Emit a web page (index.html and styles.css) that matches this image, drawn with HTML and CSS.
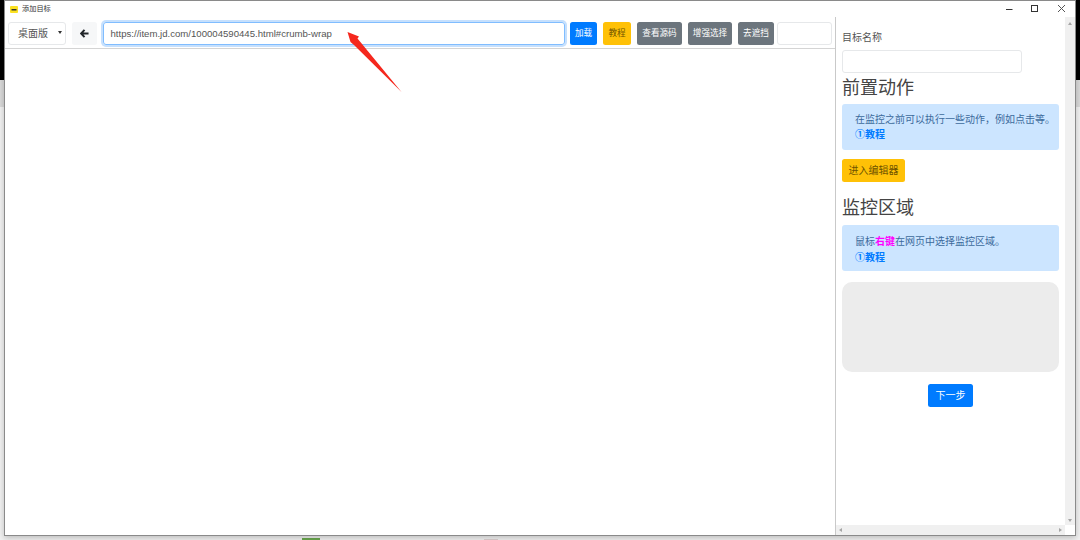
FILE: index.html
```html
<!DOCTYPE html>
<html lang="zh">
<head>
<meta charset="utf-8">
<title>添加目标</title>
<link rel="stylesheet" href="styles.css">
</head>
<body>
<div class="desktop">
  <div class="bits-top"><i></i><i></i><i></i></div>
  <div class="bit-green"></div>
  <div class="bit-pink"></div>
  <div class="window">
    <header class="titlebar">
      <svg class="app-icon" width="8" height="7" viewBox="0 0 8 7"><rect width="8" height="7" rx="1" fill="#fbe122"/><rect x="1.5" y="3" width="5" height="1.5" fill="#333"/></svg>
      <span class="title">添加目标</span>
      <div class="win-controls">
        <svg width="10" height="10" viewBox="0 0 10 10"><path d="M3 5.5h6.5" stroke="#333" fill="none"/></svg>
        <svg width="10" height="10" viewBox="0 0 10 10"><rect x="1.5" y="1.5" width="6" height="6" stroke="#333" fill="none"/></svg>
        <svg width="10" height="10" viewBox="0 0 10 10"><path d="M1 1l7 7M8 1l-7 7" stroke="#555" fill="none"/></svg>
      </div>
    </header>
    <div class="body">
      <main class="browser">
        <div class="toolbar">
          <div class="select">桌面版<span class="caret"></span></div>
          <button class="btn back" type="button" aria-label="返回">
            <svg width="9" height="9" viewBox="0 0 10 10"><path d="M5 1L1.3 5 5 9M1.6 5H9.5" stroke="#212529" stroke-width="2.2" fill="none"/></svg>
          </button>
          <div class="url">https://item.jd.com/100004590445.html#crumb-wrap</div>
          <button class="btn blue w-load" type="button">加载</button>
          <button class="btn yellow w-tut" type="button">教程</button>
          <button class="btn gray w-src" type="button">查看源码</button>
          <button class="btn gray w-enh" type="button">增强选择</button>
          <button class="btn gray w-rem" type="button">去遮挡</button>
          <div class="blank"></div>
        </div>
        <div class="page"></div>
      </main>
      <aside class="side">
        <div class="side-scroll">
          <div class="side-content">
            <label class="label">目标名称</label>
            <div class="field"></div>
            <h3 class="heading first">前置动作</h3>
            <div class="alert">
              <div>在监控之前可以执行一些动作，例如点击等。</div>
              <a class="link">①教程</a>
            </div>
            <button class="btn yellow editor" type="button">进入编辑器</button>
            <h3 class="heading second">监控区域</h3>
            <div class="alert tall">
              <div>鼠标<b class="hot">右键</b>在网页中选择监控区域。</div>
              <a class="link">①教程</a>
            </div>
            <div class="area"></div>
            <div class="next-row"><button class="btn blue next" type="button">下一步</button></div>
          </div>
          <div class="vbar"><span class="tri up"></span><span class="tri down"></span></div>
        </div>
        <div class="hbar"><span class="tri left"></span><span class="tri right"></span><span class="corner"></span></div>
      </aside>
    </div>
  </div>
  <svg class="arrow" width="60" height="70" viewBox="0 0 60 70"><polygon points="0.5,2 12,6.5 10.5,8.5 54.5,62 7,15 3.5,12" fill="#f5281e"/></svg>
</div>
</body>
</html>
```
FILE: styles.css
```css
* { box-sizing: border-box; }
html, body { margin: 0; height: 100%; overflow: hidden; }
body { font-family: "Liberation Sans", "Noto Sans CJK SC", sans-serif; color: #495057; }

.desktop {
  position: relative;
  width: 1080px;
  height: 540px;
  background: linear-gradient(#000 0 80px, #d9d9d9 80px 107px, #f1f1f1 107px);
}
.bits-top { position: absolute; left: 420px; top: 0; display: flex; gap: 60px; }
.bits-top i { width: 40px; height: 1px; background: #b5a878; }
.bit-green { position: absolute; left: 302px; top: 538px; width: 18px; height: 2px; background: #6aa84f; }
.bit-pink { position: absolute; left: 484px; top: 539px; width: 14px; height: 1px; background: #ddd0d0; }

.window {
  position: absolute;
  left: 4px;
  top: 0;
  width: 1072px;
  height: 536px;
  background: #fff;
  border: 1px solid #8a8a8a;
  box-shadow: 0 2px 6px rgba(0,0,0,.22);
  display: flex;
  flex-direction: column;
}

.titlebar { height: 16px; display: flex; align-items: center; padding-left: 5px; flex: none; }
.title { font-size: 7.2px; line-height: 14px; margin-left: 4px; color: #333; }
.win-controls { margin-left: auto; display: flex; gap: 17px; padding-right: 8px; }
.win-controls svg { display: block; }

.body { flex: 1; display: flex; min-height: 0; }
.browser { width: 830px; flex: none; display: flex; flex-direction: column; }
.toolbar {
  height: 32px;
  flex: none;
  display: flex;
  align-items: flex-start;
  padding: 5px 0 0 3px;
  border-bottom: 1px solid #d4d4d4;
}
.page { flex: 1; }

.select {
  width: 58px;
  height: 23px;
  border: 1px solid #e6e8ea;
  border-radius: 3px;
  font-size: 10px;
  line-height: 22px;
  padding-left: 9px;
  position: relative;
  color: #555;
}
.caret {
  position: absolute;
  right: 3px;
  top: 8px;
  border: 2px solid transparent;
  border-top: 3px solid #333;
  border-bottom: 0;
}

.btn {
  border: 0;
  padding: 0;
  height: 23px;
  border-radius: 2.5px;
  font: 8.6px/23px "Liberation Sans", "Noto Sans CJK SC", sans-serif;
  text-align: center;
  flex: none;
}
.back { width: 25px; margin: 0 6px 0 6px; background: #f6f7f8; display: flex; align-items: center; justify-content: center; }
.blue { background: #007bff; color: #fff; }
.yellow { background: #ffc107; color: #6e5200; }
.gray { background: #6c757d; color: #fff; }

.url {
  width: 462px;
  height: 23px;
  border: 1px solid #80bdff;
  border-radius: 3px;
  box-shadow: 0 0 0 2px #c6e0fd;
  font-size: 9.6px;
  line-height: 21px;
  padding-left: 6.5px;
  color: #555;
  flex: none;
  margin-right: 5px;
}
.w-load { width: 27px; margin-right: 6px; }
.w-tut { width: 28px; margin-right: 6px; }
.w-src { width: 45px; margin-right: 6px; }
.w-enh { width: 44px; margin-right: 6px; }
.w-rem { width: 36px; margin-right: 3px; }
.blank { width: 55px; height: 23px; border: 1px solid #e6e8ea; border-radius: 3px; flex: none; }

.side { flex: 1; display: flex; flex-direction: column; min-width: 0; border-left: 1px solid #c9c9c9; }
.side-scroll { flex: 1; display: flex; min-height: 0; }
.side-content { flex: 1; padding: 14px 6px 0 6px; font-size: 10px; line-height: 15px; min-width: 0; }
.label { display: block; height: 19px; line-height: 13px; color: #555; }
.field { width: 180px; height: 23px; border: 1px solid #e6e8ea; border-radius: 3px; }
.heading { font-weight: 400; font-size: 18px; line-height: 24px; margin: 0; color: #444; }
.heading.first { margin: 1px 0 4px; padding-top: 2px; }
.heading.second { margin: 13px 0 5px; padding-top: 1px; }
.alert {
  background: #cce5ff;
  border-radius: 3px;
  color: #3c6a9c;
  height: 46px;
  padding: 8px 0 0 13px;
  margin-bottom: 9px;
  white-space: nowrap;
}
.alert.tall { padding-top: 9px; line-height: 16px; }
.link { display: block; color: #007bff; font-weight: 700; }
.hot { color: #ff00ff; font-weight: 700; }
.editor { width: 63px; height: 23px; font-size: 10px; display: block; }
.area { height: 90px; margin-top: 11px; background: #ececec; border-radius: 10px; }
.next-row { display: flex; justify-content: center; margin-top: 12px; }
.next { width: 45px; height: 23px; font-size: 10px; }

.vbar { width: 10px; flex: none; background: #f0f0f0; position: relative; }
.hbar { height: 10px; flex: none; background: #f0f0f0; position: relative; }
.corner { position: absolute; right: 0; top: 0; width: 10px; height: 10px; background: #fff; }
.tri { position: absolute; border: 2px solid transparent; }
.tri.up { top: 5px; left: 3px; border-bottom: 3px solid #a6a6a6; border-top: 0; }
.tri.down { bottom: 3px; left: 3px; border-top: 3px solid #a6a6a6; border-bottom: 0; }
.tri.left { left: 3px; top: 3px; border-right: 3px solid #a6a6a6; border-left: 0; }
.tri.right { right: 13px; top: 3px; border-left: 3px solid #a6a6a6; border-right: 0; }

.arrow { position: absolute; left: 347px; top: 30px; }
```
